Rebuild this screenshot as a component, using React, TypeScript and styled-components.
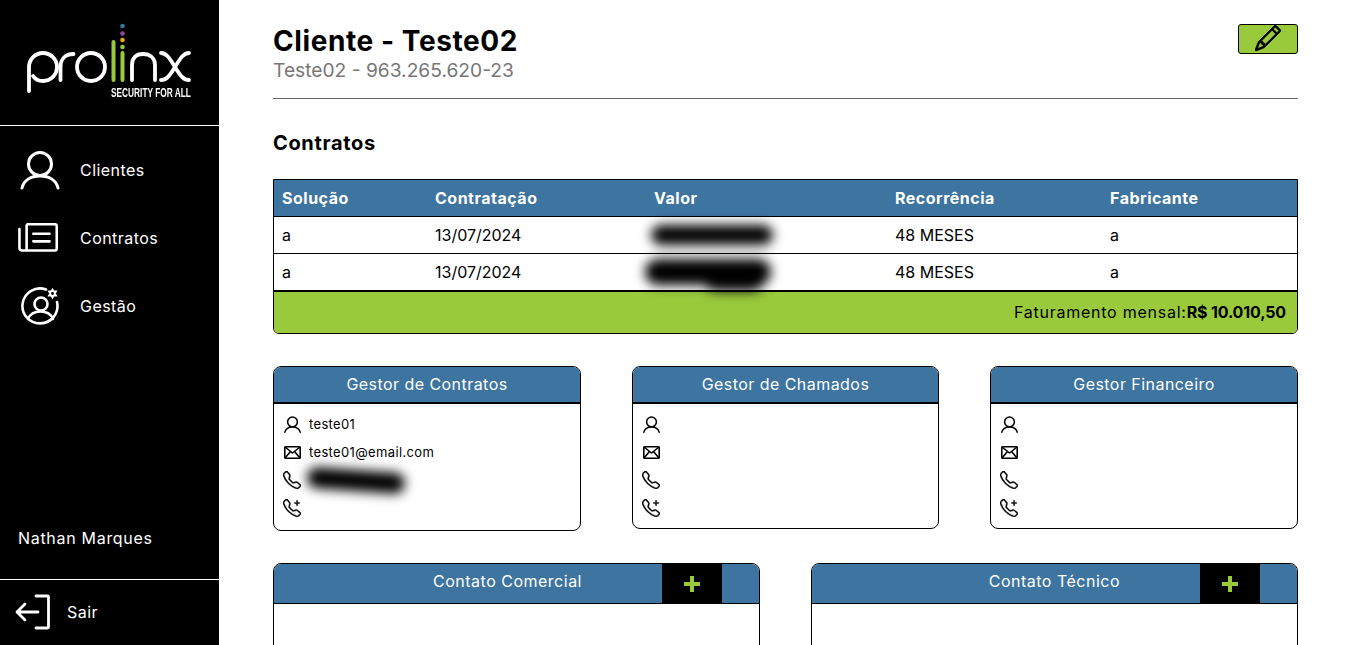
import React from 'react';
import styled, {createGlobalStyle} from "styled-components";
import {BsTelephone, BsTelephonePlus, BsPencil} from "react-icons/bs";

const blue = '#3e74a0'
const green = '#99ca3c'
const font = '"Inter", "Open Sans", sans-serif'

type Contract = {
    solucao: string,
    data: string,
    recorrencia: string,
    fabricante: string,
    smear: 'thin' | 'thick'
}

const contracts: Array<Contract> = [
    {solucao: 'a', data: '13/07/2024', recorrencia: '48 MESES', fabricante: 'a', smear: 'thin'},
    {solucao: 'a', data: '13/07/2024', recorrencia: '48 MESES', fabricante: 'a', smear: 'thick'},
]

const UserIcon = ({size}: { size: number }) => (
    <svg width={size} height={size} viewBox="0 0 40 40" fill="none" stroke="currentColor" strokeWidth={size > 24 ? 3 : 3.6} strokeLinecap="round">
        <circle cx="20" cy="14" r="11.5"/>
        <path d="M2 38c2-8 9-12 18-12s16 4 18 12"/>
    </svg>
)

const NewsIcon = () => (
    <svg width="44" height="31" viewBox="0 0 46 32" fill="none" stroke="currentColor" strokeWidth="2.7" strokeLinecap="round" strokeLinejoin="round">
        <path d="M9 3.500v23.500a1.500 1.500 0 0 0 1.500 1.500h28a2 2 0 0 0 2-2V3a2 2 0 0 0-2-2H10.500a1.500 1.500 0 0 0-1.500 1.500z"/>
        <path d="M9 28.500H4a2.500 2.500 0 0 1-2.500-2.500V6"/>
        <path d="M16 11h17M16 19h17"/>
    </svg>
)

const ManageIcon = () => (
    <svg width="40" height="38" viewBox="0 0 40 38" fill="none" stroke="currentColor" strokeWidth="2.6" strokeLinecap="round">
        <path d="M26 2.500A17.500 17.500 0 1 0 37 15"/>
        <circle cx="21" cy="17" r="6.500"/>
        <path d="M8 32c2-5 7-7.500 12.500-7.500s10.500 2.500 12.500 7.500"/>
        <g transform="translate(32.500 6.500)">
            <path d="M0-5.800L5 2.900H-5zM0 5.800L-5-2.900H5z" fill="currentColor" stroke="none"/>
            <circle r="1.400" fill="#000" stroke="none"/>
        </g>
    </svg>
)

const ExitIcon = () => (
    <svg width="36" height="36" viewBox="0 0 36 36" fill="none" stroke="currentColor" strokeWidth="2.800" strokeLinecap="round" strokeLinejoin="round">
        <path d="M21 2h11.500a1 1 0 0 1 1 1v30a1 1 0 0 1-1 1H21"/>
        <path d="M23 18H2M10 10l-8 8 8 8"/>
    </svg>
)

const MailIcon = () => (
    <svg width="17" height="13" viewBox="0 0 17 13" fill="none" stroke="currentColor" strokeWidth="1.600" strokeLinejoin="round">
        <rect x="0.800" y="0.800" width="15.400" height="11.400" rx="0.800"/>
        <path d="M1 1l7.500 6L16 1M1 12l5.500-6.500M16 12l-5.500-6.500"/>
    </svg>
)

const Logo = () => (
    <svg width="168" height="71" viewBox="25 23 168 71" fill="none" strokeLinecap="round">
        <g stroke="#fff" strokeWidth="3.800">
            <path d="M29 91V67a14 14 0 1 1 14 14c-5 0-8-2-10-5"/>
            <path d="M60.500 80V67c0-8 5-13 13-13"/>
            <circle cx="91" cy="67" r="14"/>
            <path d="M132 80V65c0-7 4-11 11-11s12 4 12 11v15"/>
            <path d="M161 53c5 0 8 4 14 14s9 13 14 13M161 80c5 0 8-3 14-13s9-14 14-14"/>
        </g>
        <path d="M113.500 42v38M122.500 53v27" stroke={green} strokeWidth="4"/>
        <circle cx="122.500" cy="26" r="2.300" fill={blue}/>
        <circle cx="122.500" cy="33.500" r="2.300" fill="#8e4a9c"/>
        <circle cx="122.500" cy="40" r="2.300" fill="#f0a51e"/>
        <circle cx="122.500" cy="47" r="2.300" fill={green}/>
    </svg>
)

const PersonCard = (props: { title: string, name?: string, email?: string, phone?: boolean }) => (
    <Card $tall={props.phone}>
        <CardTitle>{props.title}</CardTitle>
        <CardBody>
            <CardRow><RowIcon><UserIcon size={17}/></RowIcon>{props.name}</CardRow>
            <CardRow><RowIcon><MailIcon/></RowIcon>{props.email}</CardRow>
            <CardRow><RowIcon><BsTelephone size={18} stroke="currentColor" strokeWidth={0.35}/></RowIcon>{props.phone && <PhoneSmear/>}</CardRow>
            <CardRow><RowIcon><BsTelephonePlus size={18} stroke="currentColor" strokeWidth={0.35}/></RowIcon></CardRow>
        </CardBody>
    </Card>
)

const ContactCard = (props: { title: string }) => (
    <Contact>
        <ContactHead>
            <ContactTitle>{props.title}</ContactTitle>
            <AddButton>
                <svg width="16" height="16" viewBox="0 0 16 16"><path d="M6 0h4v6h6v4h-6v6H6v-6H0V6h6z" fill={green}/></svg>
            </AddButton>
        </ContactHead>
    </Contact>
)

export default function App() {
    return (
        <Page>
            <GlobalStyle/>
            <Sidebar>
                <LogoBlock>
                    <Logo/>
                    <Tagline>SECURITY FOR ALL</Tagline>
                </LogoBlock>
                <Nav>
                    <NavItem><NavIcon><UserIcon size={40}/></NavIcon>Clientes</NavItem>
                    <NavItem><NavIcon><NewsIcon/></NavIcon>Contratos</NavItem>
                    <NavItem><NavIcon><ManageIcon/></NavIcon>Gestão</NavItem>
                </Nav>
                <UserName>Nathan Marques</UserName>
                <Logout><ExitIcon/>Sair</Logout>
            </Sidebar>
            <Main>
                <Header>
                    <div>
                        <Title>Cliente - Teste02</Title>
                        <Subtitle>Teste02 - 963.265.620-23</Subtitle>
                    </div>
                    <EditButton><BsPencil size={26} stroke="currentColor" strokeWidth={0.5}/></EditButton>
                </Header>
                <SectionTitle>Contratos</SectionTitle>
                <TableBox>
                    <Table>
                        <colgroup>
                            <col width="153"/>
                            <col width="219"/>
                            <col width="241"/>
                            <col width="215"/>
                            <col/>
                        </colgroup>
                        <thead>
                        <tr>
                            <th>Solução</th>
                            <th>Contratação</th>
                            <th>Valor</th>
                            <th>Recorrência</th>
                            <th>Fabricante</th>
                        </tr>
                        </thead>
                        <tbody>
                        {contracts.map((item, i) => (
                            <tr key={i}>
                                <td>{item.solucao}</td>
                                <td>{item.data}</td>
                                <td><ValueSmear $kind={item.smear}/></td>
                                <td>{item.recorrencia}</td>
                                <td>{item.fabricante}</td>
                            </tr>
                        ))}
                        </tbody>
                    </Table>
                    <TableFooter>Faturamento mensal:<b>R$ 10.010,50</b></TableFooter>
                </TableBox>
                <Managers>
                    <PersonCard title="Gestor de Contratos" name="teste01" email="teste01@email.com" phone/>
                    <PersonCard title="Gestor de Chamados"/>
                    <PersonCard title="Gestor Financeiro"/>
                </Managers>
                <Contacts>
                    <ContactCard title="Contato Comercial"/>
                    <ContactCard title="Contato Técnico"/>
                </Contacts>
            </Main>
        </Page>
    );
};

const GlobalStyle = createGlobalStyle`
    * {
        box-sizing: border-box;
    }

    body {
        margin: 0;
        background: #fff;
        font-family: ${font};
        color: #000;
        overflow: hidden;
    }
`

const Page = styled.div`
    display: flex;
    height: 100vh;
    overflow: hidden;
`

const Sidebar = styled.aside`
    display: flex;
    flex-direction: column;
    width: 219px;
    flex-shrink: 0;
    background: #000;
    color: #fff;
    font-size: 16px;
    letter-spacing: 0.45px;
`

const LogoBlock = styled.div`
    display: flex;
    flex-direction: column;
    align-items: flex-end;
    height: 126px;
    padding: 23px 26px 0 0;
    border-bottom: 1px solid #fff;
`

const Tagline = styled.div`
    margin: -9px 2px 0 0;
    font-family: "Liberation Sans", sans-serif;
    font-size: 13px;
    font-weight: 700;
    letter-spacing: 0;
    white-space: nowrap;
    transform: scaleX(0.64);
    transform-origin: right center;
`

const Nav = styled.nav`
    display: flex;
    flex-direction: column;
    padding-top: 10px;
`

const NavItem = styled.div`
    display: flex;
    align-items: center;
    height: 68px;
    padding-left: 18px;
`

const NavIcon = styled.span`
    display: flex;
    justify-content: center;
    width: 44px;
    margin-right: 18px;
`

const UserName = styled.div`
    margin-top: auto;
    padding: 0 0 31px 18px;
    letter-spacing: 0.7px;
`

const Logout = styled.div`
    display: flex;
    align-items: center;
    gap: 16px;
    height: 66px;
    padding: 0 0 2px 15px;
    border-top: 1px solid #fff;
`

const Main = styled.main`
    flex: 1;
    min-width: 0;
    padding: 24px 67px 0 54px;
`

const Header = styled.header`
    display: flex;
    justify-content: space-between;
    align-items: flex-start;
    height: 75px;
    border-bottom: 1px solid #666;
`

const Title = styled.h1`
    margin: 0;
    font-size: 28px;
    font-weight: 700;
    line-height: 35px;
    letter-spacing: 0.58px;
`

const Subtitle = styled.p`
    margin: 0;
    font-size: 19.2px;
    line-height: 23px;
    color: #777;
`

const EditButton = styled.button`
    display: flex;
    align-items: center;
    justify-content: center;
    width: 60px;
    height: 30px;
    padding: 0 0 3px;
    background: ${green};
    border: 1px solid #000;
    border-radius: 3px;
    color: #000;
`

const SectionTitle = styled.h2`
    margin: 31px 0 23px;
    font-size: 20px;
    font-weight: 700;
    line-height: 26px;
    letter-spacing: 0.65px;
`

const TableBox = styled.div`
    border: 1px solid #000;
    border-radius: 0 0 6px 6px;
    overflow: hidden;
`

const Table = styled.table`
    width: 100%;
    table-layout: fixed;
    border-collapse: collapse;
    font-size: 16px;

    th {
        height: 36px;
        padding: 0 8px;
        background: ${blue};
        color: #fff;
        font-weight: 700;
        letter-spacing: 0.5px;
        text-align: left;
        border-bottom: 1px solid #000;
    }

    td {
        height: 37px;
        padding: 0 8px;
        border-bottom: 1px solid #000;
    }

    tbody tr:last-child td {
        height: 38px;
        border-bottom-width: 2px;
    }
`

const ValueSmear = styled.div<{ $kind: 'thin' | 'thick' }>`
    position: relative;
    z-index: 1;
    width: ${props => props.$kind === 'thin' ? '122px' : '126px'};
    height: ${props => props.$kind === 'thin' ? '20px' : '26px'};
    margin-left: ${props => props.$kind === 'thin' ? '-3px' : '-9px'};
    background: #000;
    border-radius: 13px;
    filter: blur(6px);

    &::after {
        content: "";
        display: ${props => props.$kind === 'thin' ? 'none' : 'block'};
        position: absolute;
        left: 58px;
        top: 6px;
        width: 62px;
        height: 26px;
        background: #000;
        border-radius: 13px;
    }
`

const TableFooter = styled.div`
    display: flex;
    justify-content: flex-end;
    align-items: center;
    height: 41px;
    padding: 0 11px 2px 0;
    background: ${green};
    font-size: 16px;
    letter-spacing: 0.75px;

    b {
        font-weight: 700;
        letter-spacing: -0.15px;
    }
`

const Managers = styled.section`
    display: grid;
    grid-template-columns: 308px 307px 308px;
    justify-content: space-between;
    align-items: start;
    margin-top: 32px;
`

const Card = styled.div<{ $tall?: boolean }>`
    height: ${props => props.$tall ? '165px' : '163px'};
    border: 1px solid #000;
    border-radius: 8px;
    overflow: hidden;
`

const CardTitle = styled.h3`
    margin: 0;
    height: 37px;
    background: ${blue};
    border-bottom: 2px solid #000;
    color: #fff;
    font-size: 16px;
    font-weight: 400;
    line-height: 35px;
    letter-spacing: 0.45px;
    text-align: center;
`

const CardBody = styled.div`
    display: flex;
    flex-direction: column;
    padding-top: 6px;
`

const CardRow = styled.div`
    display: flex;
    align-items: center;
    height: 28px;
    padding-left: 9px;
    font-size: 13px;
    letter-spacing: 0.35px;
`

const RowIcon = styled.span`
    display: flex;
    justify-content: center;
    width: 18px;
    margin-right: 8px;
`

const PhoneSmear = styled.div`
    width: 98px;
    height: 21px;
    margin-left: -2px;
    background: #000;
    border-radius: 10px;
    filter: blur(6px);
    transform: rotate(4deg);
`

const Contacts = styled.section`
    display: grid;
    grid-template-columns: 487px 487px;
    justify-content: space-between;
    margin-top: 32px;
`

const Contact = styled.div`
    height: 120px;
    border: 1px solid #000;
    border-radius: 8px;
    overflow: hidden;
`

const ContactHead = styled.div`
    display: flex;
    justify-content: flex-end;
    height: 40px;
    padding-right: 37px;
    background: ${blue};
    border-bottom: 1px solid #000;
`

const ContactTitle = styled.h3`
    margin: 0 80px 0 0;
    color: #fff;
    font-size: 16px;
    font-weight: 400;
    line-height: 34px;
    letter-spacing: 0.5px;
`

const AddButton = styled.button`
    display: flex;
    align-items: center;
    justify-content: center;
    width: 60px;
    height: 39px;
    padding: 0;
    background: #000;
    border: none;
`
